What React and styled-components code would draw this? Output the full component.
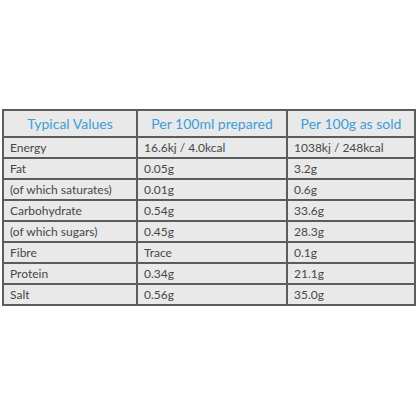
import React from 'react';
import styled, { createGlobalStyle } from 'styled-components';

const GlobalStyle = createGlobalStyle`
  html, body {
    margin: 0;
    padding: 0;
    background: #ffffff;
  }
`;

const Page = styled.div`
  width: 416px;
  height: 416px;
  box-sizing: border-box;
  padding: 109px 2px 0 2px;
  background: #ffffff;
`;

const Table = styled.table`
  width: 412px;
  border-collapse: collapse;
  table-layout: fixed;
  background: #e9e9ea;
  border: 2px solid #5c5c5c;
  font-family: Lato, "Open Sans", sans-serif;
`;

const HeadCell = styled.th`
  height: 25px;
  padding: 0;
  border: 2px solid #5c5c5c;
  color: #3a9fd6;
  font-size: 14px;
  font-weight: 400;
  text-align: center;
`;

const Cell = styled.td`
  height: 19px;
  padding: 0 0 0 6px;
  border: 2px solid #5c5c5c;
  color: #474747;
  font-size: 12px;
  text-align: left;
  white-space: nowrap;
`;

const rows = [
  ['Energy', '16.6kj / 4.0kcal', '1038kj / 248kcal'],
  ['Fat', '0.05g', '3.2g'],
  ['(of which saturates)', '0.01g', '0.6g'],
  ['Carbohydrate', '0.54g', '33.6g'],
  ['(of which sugars)', '0.45g', '28.3g'],
  ['Fibre', 'Trace', '0.1g'],
  ['Protein', '0.34g', '21.1g'],
  ['Salt', '0.56g', '35.0g'],
];

export default function App() {
  return (
    <>
      <GlobalStyle />
      <Page>
        <Table>
          <colgroup>
            <col style={{ width: 134 }} />
            <col style={{ width: 150 }} />
            <col style={{ width: 128 }} />
          </colgroup>
          <thead>
            <tr>
              <HeadCell>Typical Values</HeadCell>
              <HeadCell>Per 100ml prepared</HeadCell>
              <HeadCell>Per 100g as sold</HeadCell>
            </tr>
          </thead>
          <tbody>
            {rows.map((r) => (
              <tr key={r[0]}>
                {r.map((v, i) => (
                  <Cell key={i}>{v}</Cell>
                ))}
              </tr>
            ))}
          </tbody>
        </Table>
      </Page>
    </>
  );
}
